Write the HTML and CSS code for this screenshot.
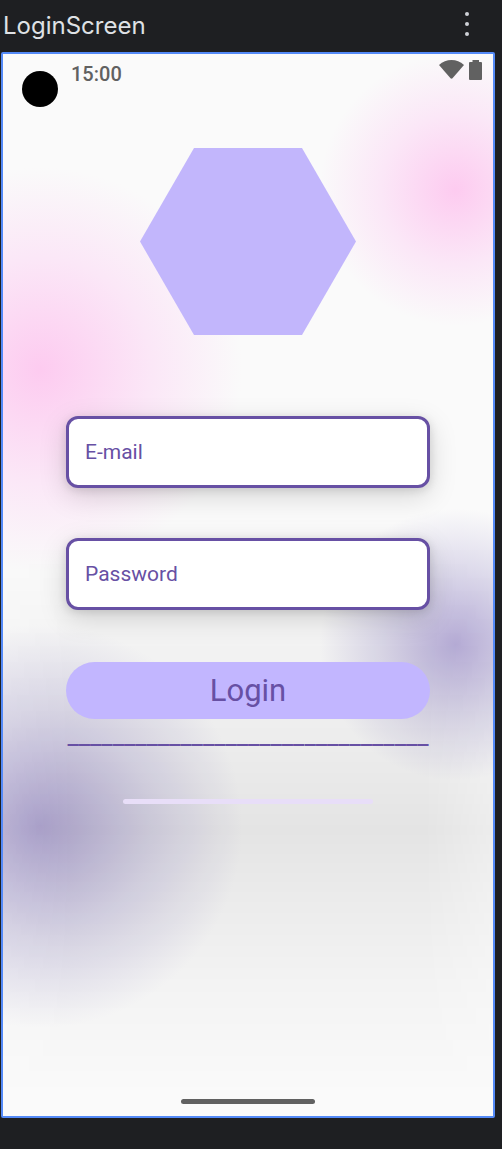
FILE: index.html
```html
<!DOCTYPE html>
<html lang="en">
<head>
<meta charset="utf-8">
<meta name="viewport" content="width=device-width, initial-scale=1">
<title>LoginScreen</title>
<link rel="stylesheet" href="styles.css">
</head>
<body>
<header class="toolbar">
  <h1 class="toolbar-title">LoginScreen</h1>
  <button class="menu-button" type="button" aria-label="More options">
    <svg width="6" height="26" viewBox="0 0 6 26" fill="currentColor"><circle cx="3" cy="3" r="2"/><circle cx="3" cy="13" r="2"/><circle cx="3" cy="23" r="2"/></svg>
  </button>
</header>
<main class="phone">
  <div class="status-bar">
    <span class="camera"></span>
    <time class="clock">15:00</time>
    <svg class="wifi" width="26" height="20" viewBox="0 0 26 20" fill="currentColor"><path d="M0 5Q5.500 0 12.500 0T25 5L13.500 18.300Q12.500 19.200 11.500 18.300Z"/></svg>
    <svg class="battery" width="14" height="20" viewBox="0 0 14 20" fill="currentColor"><path d="M3.500 0H10V2H12Q13 2 13 3V19Q13 20 12 20H1Q0 20 0 19V3Q0 2 1 2H3.500Z"/></svg>
  </div>
  <form class="login">
    <svg class="logo" width="216" height="187" viewBox="0 0 216 187"><path d="M54 0H162L216 93.500L162 187H54L0 93.500Z" fill="#c2b6fc"/></svg>
    <input class="field" type="email" placeholder="E-mail" aria-label="E-mail">
    <input class="field" type="password" placeholder="Password" aria-label="Password">
    <button class="submit" type="button">Login</button>
    <div class="divider">________________________________</div>
    <progress class="loader" value="0" max="1" aria-label="Loading"></progress>
  </form>
  <div class="home-bar"></div>
</main>
</body>
</html>
```
FILE: styles.css
```css
* {
  box-sizing: border-box;
}

body {
  margin: 0;
  min-height: 100vh;
  display: flex;
  flex-direction: column;
  background: #1e1f22;
  font-family: Roboto, "Liberation Sans", sans-serif;
}

.toolbar {
  display: flex;
  align-items: flex-start;
  justify-content: space-between;
  height: 52px;
  padding: 11px 32px 0 3px;
}

.toolbar-title {
  margin: 0;
  font: 400 24px/30px Inter, sans-serif;
  color: #dfe1e5;
}

.menu-button {
  display: flex;
  padding: 0;
  border: 0;
  background: none;
  color: #ced0d6;
}

.phone {
  position: relative;
  isolation: isolate;
  flex: 1;
  display: flex;
  flex-direction: column;
  margin: 0 7px 31px 1px;
  border: 2px solid #548af7;
  border-radius: 2px;
  background:
    radial-gradient(circle 136px at 92.4% 12.8%, #fdcbf0, #fbe7f7 55%, #fafafa00),
    radial-gradient(circle 202px at 7.6% 29.7%, #fdcbf0, #fbe7f7 55%, #fafafa00),
    radial-gradient(circle 136px at 92.4% 55.6%, #b9afda, #dedbec 55%, #fafafa00),
    radial-gradient(circle 202px at 7.6% 72.7%, #b6acd8, #dedbec 55%, #fafafa00),
    #fafafa;
}

.phone::before {
  content: "";
  position: absolute;
  z-index: -1;
  inset: 46% 0 2% 0;
  background: linear-gradient(#0000, #00000008 20%, #0000000d 35%, #00000016 52%, #0000000f 64%, #00000007 80%, #0000);
  mask-image: linear-gradient(90deg, #0009, #000 14%, #000 86%, #0009);
}

.status-bar {
  display: flex;
  align-items: flex-start;
  padding: 6px 10px 0 19px;
  color: #616161;
}

.camera {
  width: 36px;
  height: 36px;
  margin-top: 11px;
  border-radius: 50%;
  background: #000;
}

.clock {
  margin: 2px auto 0 13px;
  font-size: 20px;
  line-height: 24px;
  font-weight: 500;
}

.battery {
  margin-left: 4px;
}

.login {
  display: flex;
  flex-direction: column;
  padding: 41px 63px 0;
}

.logo {
  align-self: center;
  margin-bottom: 81px;
}

.field {
  width: 100%;
  height: 72px;
  margin-bottom: 50px;
  padding: 0 16px;
  border: 3px solid #6750a4;
  border-radius: 12px;
  outline: 0;
  background: #fff;
  box-shadow: 0 8px 28px #00000026, 0 2px 10px #0000001f;
  font: 400 21px/24px Roboto, sans-serif;
  color: #6750a4;
}

.field::placeholder {
  color: #6750a4;
  opacity: 1;
}

.submit {
  height: 57px;
  margin-top: 2px;
  border: 0;
  border-radius: 29px;
  background: #c2b6ff;
  font: 400 31px/36px Roboto, sans-serif;
  color: #6750a4;
}

.divider {
  overflow: hidden;
  height: 34px;
  font-size: 25px;
  line-height: 34px;
  text-align: center;
  white-space: nowrap;
  color: #6750a4;
}

.loader {
  appearance: none;
  align-self: center;
  width: 250px;
  height: 5px;
  margin-top: 46px;
  border: 0;
  border-radius: 3px;
  overflow: hidden;
  background: #e8def8;
}

.loader::-webkit-progress-bar {
  background: #e8def8;
}

.home-bar {
  width: 134px;
  height: 5px;
  margin: auto auto 12px;
  border-radius: 3px;
  background: #616161;
}
```
